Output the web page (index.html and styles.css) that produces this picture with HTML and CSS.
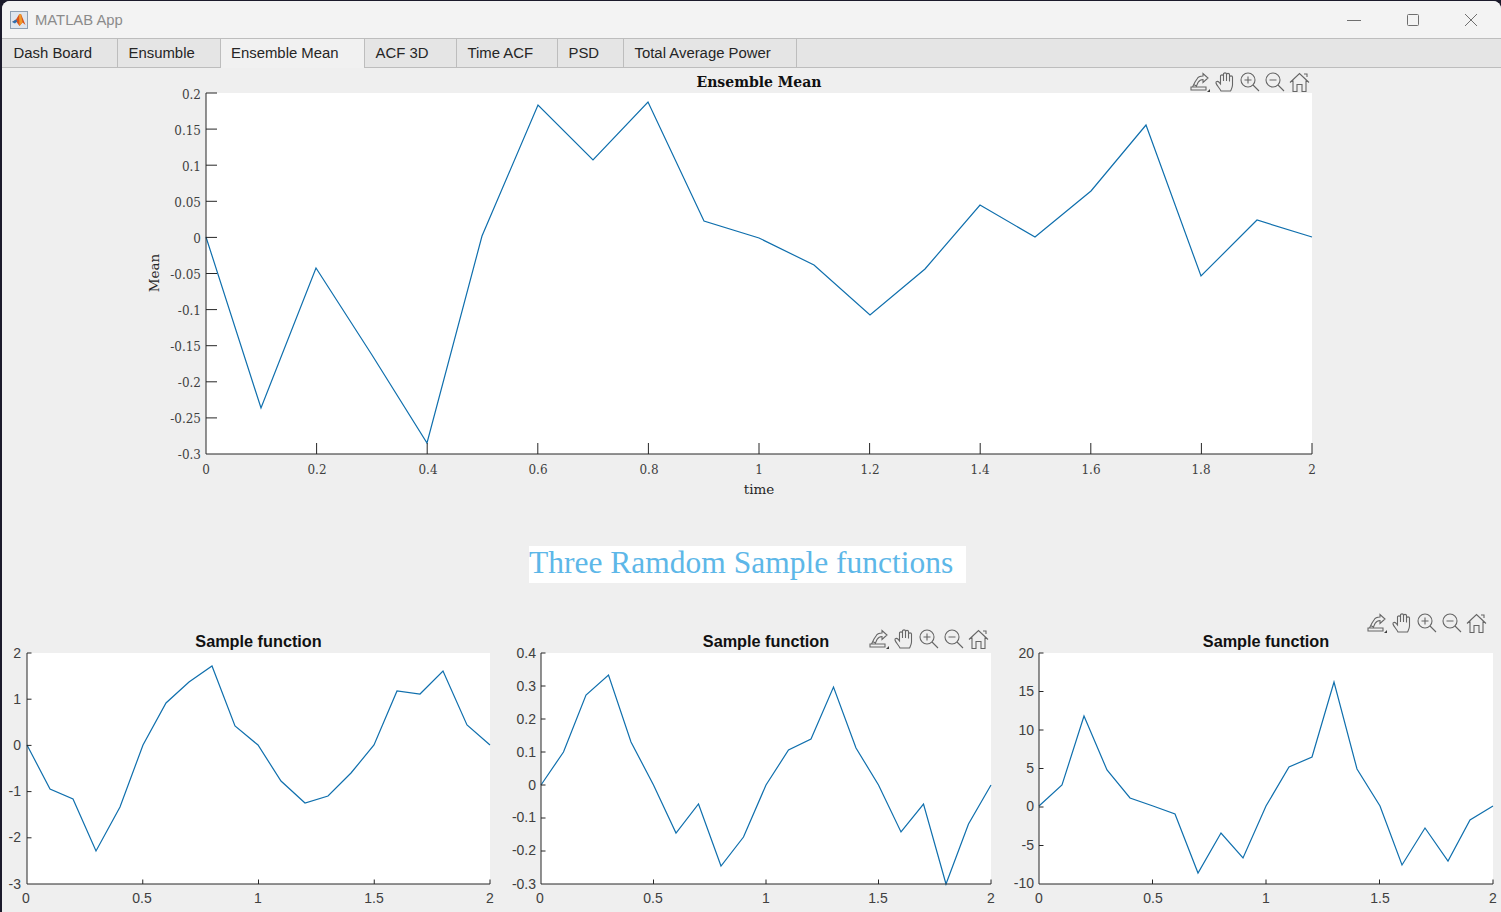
FILE: index.html
```html
<!DOCTYPE html>
<html lang="en">
<head>
    <meta charset="UTF-8">
    <title>MATLAB App</title>
    <link rel="stylesheet" href="styles.css">
</head>
<body>
    <!-- axes toolbar, reused by every chart -->
    <svg class="defs" width="0" height="0">
        <symbol id="axes-toolbar" viewBox="0 0 125 22">
            <g class="tool">
                <path d="M3 19H18V16H3ZM4.500 16L7 11M7 11L9 8C10 6 12.500 5 15 5V2.500L20 7L15 11.500V8.500C12.500 8.500 11 10 10 11.500L8 16M5.500 13.500L8.500 15"/>
                <path class="tool-dark" d="M22 21H19L22 18Z"/>
            </g>
            <g class="tool" transform="translate(27 0)">
                <path d="M6 20C4.500 17 1.500 14 1 12C.7 10.500 2.500 9.800 3.800 11L5.500 13V5C5.500 3.500 8.500 3.500 8.500 5V10V3C8.500 1.500 11.500 1.500 11.500 3V10V3.500C11.500 2 14.500 2 14.500 3.500V10.500V6C14.500 4.500 17.500 4.500 17.500 6V14C17.500 16.500 16.500 18 15.500 20Z"/>
            </g>
            <g class="tool" transform="translate(52 1)">
                <circle cx="8" cy="8" r="7"/>
                <path d="M13 13L19 19M8 4.500V11.500M4.500 8H11.500"/>
            </g>
            <g class="tool" transform="translate(77 1)">
                <circle cx="8" cy="8" r="7"/>
                <path d="M13 13L19 19M4.500 8H11.500"/>
            </g>
            <g class="tool" transform="translate(100.500 0)">
                <path d="M1.500 11.500L11 2.500L20.500 11.500M4.500 9.500V20.500H8.500V13.500H13.500V20.500H17.500V9.500M15.500 3H18.500V6"/>
            </g>
        </symbol>
    </svg>

    <div class="window">
        <header class="titlebar">
            <svg class="app-icon" width="18" height="18" viewBox="0 0 18 18">
                <rect x="0.500" y="0.500" width="17" height="17" fill="#dfe6ee" stroke="#8fa0b3"/>
                <path d="M2 11L6 8.500L9 3.500L11 3L15.500 14L12.500 11.500L9.500 15L6.500 11Z" fill="#d9541e"/>
                <path d="M2 11L6 8.500L7.500 10.500L6.500 11L5 12.500Z" fill="#2f6fb0"/>
                <path d="M9 3.500L11 3L12.500 11.500L9.500 15Z" fill="#f09a2a"/>
            </svg>
            <span class="app-title">MATLAB App</span>
            <div class="window-buttons">
                <svg width="14" height="14" viewBox="0 0 14 14"><path d="M0 7.500H14"/></svg>
                <svg width="14" height="14" viewBox="0 0 14 14"><rect x="1.500" y="1.500" width="11" height="11" rx="1"/></svg>
                <svg width="14" height="14" viewBox="0 0 14 14"><path d="M1 1L13 13M13 1L1 13"/></svg>
            </div>
        </header>

        <nav class="tabs">
            <div class="tab tab-dash">Dash Board</div>
            <div class="tab tab-ensumble">Ensumble</div>
            <div class="tab tab-mean active">Ensemble Mean</div>
            <div class="tab tab-acf">ACF 3D</div>
            <div class="tab tab-time">Time ACF</div>
            <div class="tab tab-psd">PSD</div>
            <div class="tab tab-power">Total Average Power</div>
        </nav>

        <main class="content">
            <svg class="chart chart-main" viewBox="2 68 1320 440">
                <rect class="plot-bg" x="206" y="93" width="1106" height="361"/>
                <polyline class="line" points="206,237 261,408 316,268 372,355 427,443 482,236 538,105 593,160 648,102 704,221 759,238 814,265 870,315 925,269 980,205 1035,237 1091,191 1146,125 1201,276 1257,220 1312,237"/>
                <path class="axis" d="M206 93V454H1312M206 93H217M206 129.100H217M206 165.200H217M206 201.300H217M206 237.400H217M206 273.500H217M206 309.600H217M206 345.700H217M206 381.800H217M206 417.900H217M316.600 454V443M427.200 454V443M537.800 454V443M648.400 454V443M759 454V443M869.600 454V443M980.200 454V443M1090.800 454V443M1201.400 454V443M1312 454V443"/>
                <g class="serif-ticks y-ticks">
                    <text x="201" y="99">0.2</text>
                    <text x="201" y="135">0.15</text>
                    <text x="201" y="171">0.1</text>
                    <text x="201" y="207">0.05</text>
                    <text x="201" y="243">0</text>
                    <text x="201" y="279">-0.05</text>
                    <text x="201" y="315">-0.1</text>
                    <text x="201" y="351">-0.15</text>
                    <text x="201" y="387">-0.2</text>
                    <text x="201" y="423">-0.25</text>
                    <text x="201" y="459">-0.3</text>
                </g>
                <g class="serif-ticks x-ticks">
                    <text x="206" y="474">0</text>
                    <text x="317" y="474">0.2</text>
                    <text x="428" y="474">0.4</text>
                    <text x="538" y="474">0.6</text>
                    <text x="649" y="474">0.8</text>
                    <text x="759" y="474">1</text>
                    <text x="870" y="474">1.2</text>
                    <text x="980" y="474">1.4</text>
                    <text x="1091" y="474">1.6</text>
                    <text x="1201" y="474">1.8</text>
                    <text x="1312" y="474">2</text>
                </g>
                <text class="serif-label" x="759" y="494">time</text>
                <text class="serif-label" transform="translate(159 273) rotate(-90)">Mean</text>
                <text class="serif-title" x="759" y="87">Ensemble Mean</text>
                <use href="#axes-toolbar" x="1188" y="71" width="125" height="22"/>
            </svg>

            <h2 class="samples-heading">Three Ramdom Sample functions</h2>

            <div class="sample-row">
                <svg class="chart sample-one" viewBox="2 610 493 300">
                    <rect class="plot-bg" x="27" y="653" width="463" height="231"/>
                    <polyline class="line" points="27,745 50,789 73,799 96,851 120,807 143,745 166,703 189,682 212,666 235,726 258,745 281,781 305,803 328,796 351,773 374,745 397,691 420,694 443,671 467,725 490,745"/>
                    <path class="axis" d="M27 653V884H490M27 653H31.500M27 699.200H31.500M27 745.400H31.500M27 791.600H31.500M27 837.800H31.500M142.750 884V879.500M258.500 884V879.500M374.250 884V879.500M490 884V879.500"/>
                    <g class="sans-ticks y-ticks">
                        <text x="21" y="658">2</text>
                        <text x="21" y="704">1</text>
                        <text x="21" y="750">0</text>
                        <text x="21" y="796">-1</text>
                        <text x="21" y="842">-2</text>
                        <text x="21" y="889">-3</text>
                    </g>
                    <g class="sans-ticks x-ticks">
                        <text x="26" y="903">0</text>
                        <text x="142" y="903">0.5</text>
                        <text x="258" y="903">1</text>
                        <text x="374" y="903">1.5</text>
                        <text x="490" y="903">2</text>
                    </g>
                    <text class="sans-title" x="258.500" y="647">Sample function</text>
                </svg>

                <svg class="chart sample-two" viewBox="495 610 505 300">
                    <rect class="plot-bg" x="541" y="653" width="450" height="231"/>
                    <polyline class="line" points="541,785 563.500,752 586,695 608.500,675 631,742 653.500,785 676,833 698.500,804 721,866 743.500,837 766,785 788.500,750 811,739 833.500,687 856,748 878.500,785 901,832 923.500,804 946,884 968.500,824 991,785"/>
                    <path class="axis" d="M541 653V884H991M541 653H545.500M541 686H545.500M541 719H545.500M541 752H545.500M541 785H545.500M541 818H545.500M541 851H545.500M653.500 884V879.500M766 884V879.500M878.500 884V879.500M991 884V879.500"/>
                    <g class="sans-ticks y-ticks">
                        <text x="536" y="658">0.4</text>
                        <text x="536" y="691">0.3</text>
                        <text x="536" y="724">0.2</text>
                        <text x="536" y="757">0.1</text>
                        <text x="536" y="790">0</text>
                        <text x="536" y="822">-0.1</text>
                        <text x="536" y="855">-0.2</text>
                        <text x="536" y="889">-0.3</text>
                    </g>
                    <g class="sans-ticks x-ticks">
                        <text x="540" y="903">0</text>
                        <text x="653" y="903">0.5</text>
                        <text x="766" y="903">1</text>
                        <text x="878" y="903">1.5</text>
                        <text x="991" y="903">2</text>
                    </g>
                    <text class="sans-title" x="766" y="647">Sample function</text>
                    <use href="#axes-toolbar" x="867" y="628" width="125" height="22"/>
                </svg>

                <svg class="chart sample-three" viewBox="1000 610 499 300">
                    <rect class="plot-bg" x="1039" y="653" width="454" height="231"/>
                    <polyline class="line" points="1039,806 1062,785 1084,716 1107,770 1130,798 1153,806 1175,814 1198,873 1221,833 1243,858 1266,806 1289,767 1312,757 1334,682 1357,769 1380,806 1402,865 1425,828 1448,861 1470,820 1493,806"/>
                    <path class="axis" d="M1039 653V884H1493M1039 653H1043.500M1039 691.500H1043.500M1039 730H1043.500M1039 768.500H1043.500M1039 807H1043.500M1039 845.500H1043.500M1152.500 884V879.500M1266 884V879.500M1379.500 884V879.500M1493 884V879.500"/>
                    <g class="sans-ticks y-ticks">
                        <text x="1034" y="658">20</text>
                        <text x="1034" y="696">15</text>
                        <text x="1034" y="735">10</text>
                        <text x="1034" y="773">5</text>
                        <text x="1034" y="811">0</text>
                        <text x="1034" y="850">-5</text>
                        <text x="1034" y="888">-10</text>
                    </g>
                    <g class="sans-ticks x-ticks">
                        <text x="1039" y="903">0</text>
                        <text x="1153" y="903">0.5</text>
                        <text x="1266" y="903">1</text>
                        <text x="1380" y="903">1.5</text>
                        <text x="1493" y="903">2</text>
                    </g>
                    <text class="sans-title" x="1266" y="647">Sample function</text>
                    <use href="#axes-toolbar" x="1365" y="612" width="125" height="22"/>
                </svg>
            </div>
        </main>
    </div>
</body>
</html>
```

FILE: styles.css
```css
html, body {
    margin: 0;
    height: 100%;
    overflow: hidden;
    background-color: #1b1a2b;
}
.defs {
    display: block;
    height: 0;
}
.window {
    display: flex;
    flex-direction: column;
    box-sizing: border-box;
    height: 912px;
    margin: 1px 0 0 2px;
    background-color: #efefef;
    border-radius: 8px 8px 0 0;
    overflow: hidden;
    font-family: "Liberation Sans", Arial, sans-serif;
}

/* title bar */
.titlebar {
    display: flex;
    align-items: center;
    flex: 0 0 37px;
    padding-left: 8px;
    background-color: #f3f3f3;
}
.app-icon {
    margin-right: 7px;
}
.app-title {
    font-size: 14.800px;
    color: #8b8b8b;
}
.window-buttons {
    display: flex;
    gap: 44.500px;
    margin-left: auto;
    margin-right: 23px;
}
.window-buttons svg {
    fill: none;
    stroke: #6f6f6f;
    stroke-width: 1;
}

/* tabs */
.tabs {
    display: flex;
    flex: 0 0 30px;
    box-sizing: border-box;
    background-color: #e5e5e5;
    border-top: 1px solid #bdbdbd;
    border-bottom: 1px solid #bdbdbd;
}
.tab {
    box-sizing: border-box;
    padding: 6px 0 0 10.500px;
    font-size: 14.900px;
    color: #262626;
    border-right: 1px solid #bdbdbd;
}
.tab.active {
    padding-left: 10px;
    background-color: #f1f1f1;
    margin-bottom: -1px;
}
.tab-dash {
    width: 116px;
    padding-left: 11.500px;
}
.tab-ensumble { width: 103px; }
.tab-mean { width: 144px; }
.tab-acf { width: 92px; }
.tab-time { width: 101px; }
.tab-psd { width: 66px; }
.tab-power { width: 173px; }

/* charts */
.content {
    display: flex;
    flex-direction: column;
}
.chart {
    display: block;
    flex: none;
}
.chart-main {
    width: 1320px;
    height: 440px;
}
.plot-bg {
    fill: #ffffff;
}
.line {
    fill: none;
    stroke: #0f6fad;
    stroke-width: 1.200;
}
.axis {
    fill: none;
    stroke: #262626;
    stroke-width: 1;
}
.serif-ticks {
    font-family: "DejaVu Serif", serif;
    font-size: 12px;
    fill: #404040;
}
.sans-ticks {
    font-size: 14px;
    fill: #404040;
}
.y-ticks {
    text-anchor: end;
}
.x-ticks {
    text-anchor: middle;
}
.serif-label {
    font-family: "DejaVu Serif", serif;
    font-size: 13.500px;
    fill: #262626;
    text-anchor: middle;
}
.serif-title {
    font-family: "DejaVu Serif", serif;
    font-size: 14px;
    font-weight: bold;
    fill: #111111;
    text-anchor: middle;
}
.sans-title {
    font-size: 16.250px;
    font-weight: bold;
    fill: #111111;
    text-anchor: middle;
}
.tool {
    fill: none;
    stroke: #666666;
    stroke-width: 1.100;
}
.tool-dark {
    fill: #404040;
    stroke: none;
}

/* heading between the charts */
.samples-heading {
    align-self: flex-start;
    margin: 38px 0 0 527px;
    padding: 0 13px 0 0;
    height: 37px;
    line-height: 34px;
    background-color: #ffffff;
    color: #5db7e8;
    font-family: "Liberation Serif", serif;
    font-size: 31.500px;
    font-weight: normal;
    white-space: nowrap;
}
.sample-row {
    display: flex;
    margin-top: 27px;
}
.sample-one {
    width: 493px;
    height: 300px;
}
.sample-two {
    width: 505px;
    height: 300px;
}
.sample-three {
    width: 499px;
    height: 300px;
}
```
